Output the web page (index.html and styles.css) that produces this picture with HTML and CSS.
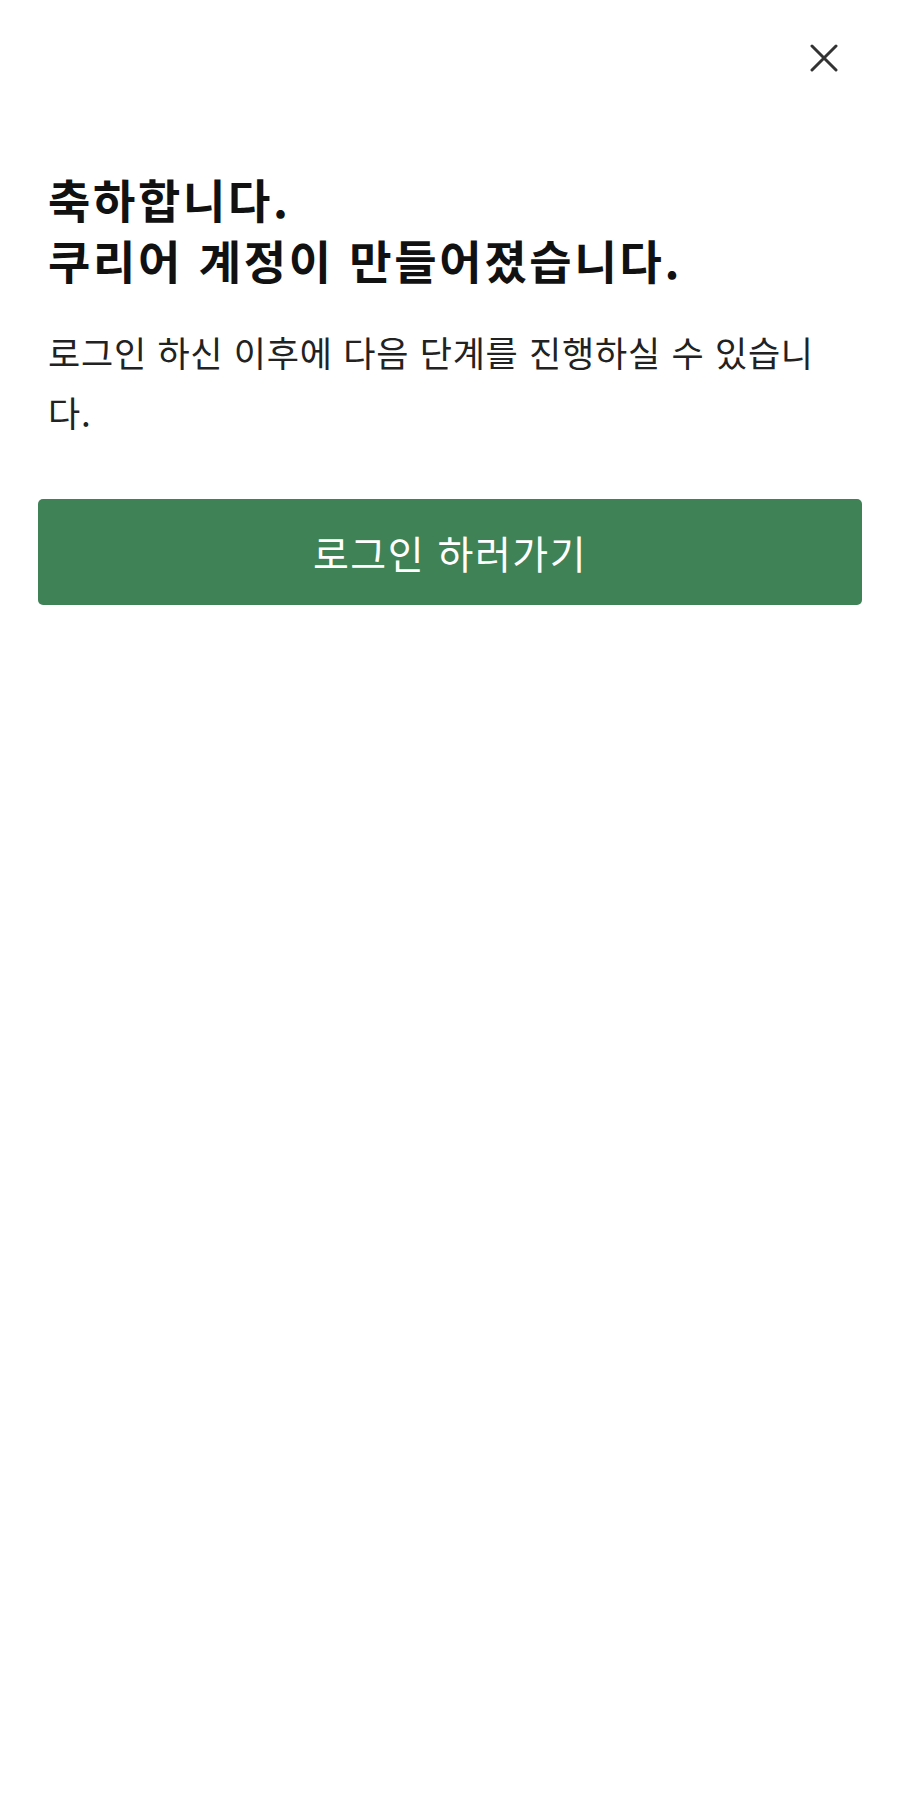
FILE: index.html
```html
<!DOCTYPE html>
<html lang="ko">
<head>
	<meta charset="UTF-8">
	<title>계정 생성 완료</title>
	<link rel="stylesheet" href="styles.css">
</head>
<body>
	<div class="page">
		<div class="topbar">
			<span class="close">
				<svg width="28" height="28" viewBox="0 0 28 28"><path d="M2 2L26 26M26 2L2 26" stroke="#333" stroke-width="3" stroke-linecap="round"/></svg>
			</span>
		</div>
		<div class="content">
			<h1 class="title">축하합니다.<br>쿠리어 계정이 만들어졌습니다.</h1>
			<p class="desc">로그인 하신 이후에 다음 단계를 진행하실 수 있습니다.</p>
		</div>
		<div class="btnwrap">
			<a class="btn" href="#">로그인 하러가기</a>
		</div>
	</div>
</body>
</html>
```

FILE: styles.css
```css
*{
	margin: 0;
	padding: 0;
	box-sizing: border-box;
}
body{
	background: #fff;
	font-family: "Noto Sans CJK KR", "Noto Sans", sans-serif;
	color: #111;
}
.page{
	width: 900px;
	min-height: 1804px;
}
.topbar{
	height: 116px;
	display: flex;
	justify-content: flex-end;
	align-items: center;
	padding-right: 62px;
}
.close{
	display: block;
	width: 28px;
	height: 28px;
}
.content{
	padding: 52px 60px 0 48px;
}
.title{
	font-size: 46px;
	font-weight: 700;
	line-height: 61px;
	letter-spacing: 2.7px;
	color: #111;
}
.desc{
	margin-top: 32px;
	font-size: 35px;
	line-height: 60px;
	letter-spacing: 0.75px;
	color: #222;
}
.btnwrap{
	padding: 57px 38px 0 38px;
}
.btn{
	display: block;
	height: 106px;
	line-height: 106px;
	text-align: center;
	background: #3e8256;
	color: #fff;
	border-radius: 5px;
	font-size: 39px;
	letter-spacing: 1.5px;
	text-decoration: none;
}
```
